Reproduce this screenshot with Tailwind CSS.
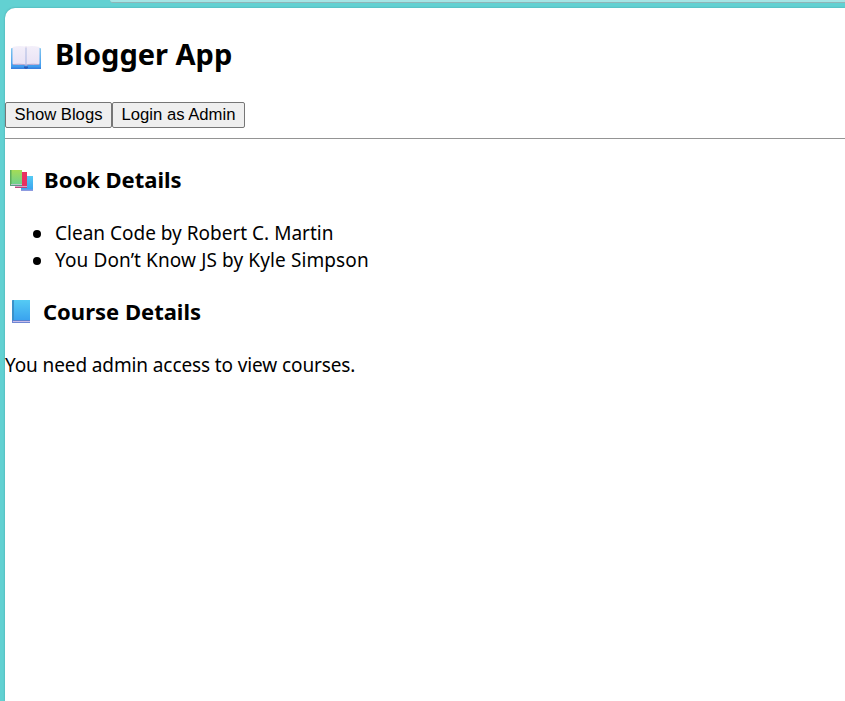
<!DOCTYPE html>
<html lang="en">
<head>
<meta charset="utf-8">
<title>Blogger App</title>
<script src="https://cdn.jsdelivr.net/npm/@tailwindcss/browser@4"></script>
</head>
<body class="h-screen overflow-hidden bg-[#62d1d2] font-['Noto_Sans',sans-serif] text-black">
<div class="flex h-screen flex-col">
  <div class="h-2 shrink-0 pl-[110px]">
    <div class="h-[3px] rounded-bl-[6px] border-b border-[#8fb5b7] bg-[#a5e5e5]"></div>
  </div>
  <main class="ml-[5px] grow rounded-tl-[10px] bg-white shadow-[0_0_2px_rgba(0,70,80,0.35)]">
    <h1 class="flex h-[94px] items-center pl-[6px] text-[29px] leading-none font-bold">
      <svg class="mt-1 h-6 w-[30px] shrink-0" viewBox="0 0 30 24">
        <defs>
          <linearGradient id="page" x2="0" y2="1"><stop stop-color="#f3effa"/><stop offset="1" stop-color="#e9e2f4"/></linearGradient>
          <linearGradient id="cover" x2="0" y2="1"><stop stop-color="#83c5ee"/><stop offset="1" stop-color="#3796ee"/></linearGradient>
        </defs>
        <rect y="3" width="30" height="21" rx="1" fill="url(#cover)"/>
        <path d="M0 22.500h30V24H0z" fill="#3a7fdc"/>
        <path d="M1.500 2Q8 .2 14.700 1.500v18.200H3q-1.500 0-1.500-1.500zM15.300 1.500Q22 .2 28.500 2v16.200q0 1.500-1.500 1.500H15.300z" fill="url(#page)"/>
        <path d="M2 19.500q6-.5 11 0l2 1 2-1q5-.5 11 0" fill="none" stroke="#b7a6cf"/>
        <path d="M15 1.500v18" stroke="#d2c7e4"/>
        <path d="M13 21.500h4V23l-2 1-2-1z" fill="#285bb8"/>
      </svg>
      <span class="mb-[3px] ml-[14px]">Blogger App</span>
    </h1>
    <div class="flex h-[26px] font-['Liberation_Sans',Arial,sans-serif] text-[16.670px] leading-none">
      <button class="w-[107px] rounded-[2px] border border-[#767676] bg-[#efefef] whitespace-nowrap">Show Blogs</button>
      <button class="w-[133px] rounded-[2px] border border-[#767676] bg-[#efefef] whitespace-nowrap">Login as Admin</button>
    </div>
    <hr class="mt-[10px] border-t border-[#949494]">
    <h2 class="mt-[26px] flex h-[30px] items-center pl-[5px] text-[22px] leading-none font-bold">
      <svg class="mt-px h-[22px] w-[23px] shrink-0" viewBox="0 0 23 22">
        <defs>
          <linearGradient id="green" x2="0" y2="1"><stop stop-color="#a5dc55"/><stop offset="1" stop-color="#70d18c"/></linearGradient>
          <linearGradient id="blue" x2="0" y2="1"><stop stop-color="#55cbf4"/><stop offset="1" stop-color="#3aa3ef"/></linearGradient>
        </defs>
        <path d="M11 6h12v14H11z" fill="url(#blue)"/>
        <path d="M11 19.500h12V21H11z" fill="#8d9be0"/>
        <path d="M5 2h12v14.500H5z" fill="#e93161"/>
        <path d="M5 16h12v1H5z" fill="#dfa0c4"/><path d="M5 17h12v1H5z" fill="#b8477f"/>
        <path d="M0 0h12v14H0z" fill="url(#green)"/><path d="M0 0h1.500v15H0z" fill="#5cae5c"/>
        <path d="M1 14h11v1H1z" fill="#bcc5cf"/><path d="M0 15h12v1H0z" fill="#5a9a86"/>
      </svg>
      <span class="mb-[2px] ml-[11px]">Book Details</span>
    </h2>
    <ul class="mt-[25px] list-none text-[19px] leading-[27px]">
      <li class="flex items-center pl-[28px]"><span class="mr-[14px] size-2 rounded-full bg-black"></span><span>Clean Code by Robert C. Martin</span></li>
      <li class="flex items-center pl-[28px]"><span class="mr-[14px] size-2 rounded-full bg-black"></span><span class="tracking-[0.110px]">You Don’t Know JS by Kyle Simpson</span></li>
    </ul>
    <h2 class="mt-[22px] flex h-[30px] items-center pl-[7px] text-[22px] leading-none font-bold">
      <svg class="h-[23px] w-[18px] shrink-0" viewBox="0 0 18 23">
        <path d="M0 1q0-1 1-1h17v20H0z" fill="url(#blue)"/>
        <path d="M0 1q0-1 1-1h1v20H0z" fill="#3b91c9"/>
        <path d="M0 20h18v1H0z" fill="#5a80d0"/>
        <path d="M1 21h17v1H1z" fill="#c9bde8"/>
        <path d="M0 21h1v1h17v1H0z" fill="#6f86d4"/>
      </svg>
      <span class="ml-[13px]">Course Details</span>
    </h2>
    <p class="mt-[26px] text-[19px] leading-[27px] tracking-[-0.110px]">You need admin access to view courses.</p>
  </main>
</div>
</body>
</html>
